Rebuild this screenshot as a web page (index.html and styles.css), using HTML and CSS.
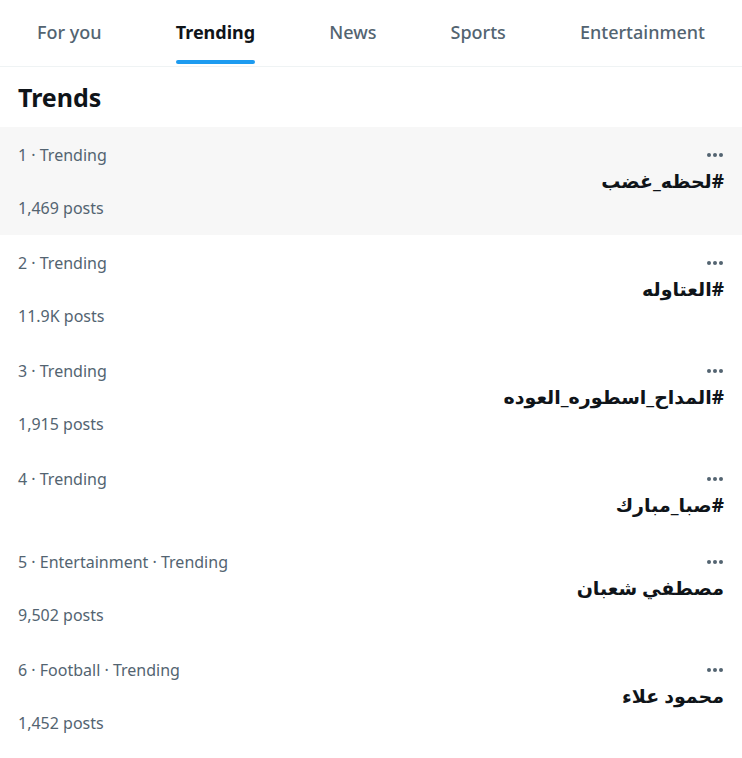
FILE: index.html
```html
<!DOCTYPE html>
<html lang="en">
<head>
  <meta charset="UTF-8" />
  <meta name="viewport" content="width=device-width, initial-scale=1.0" />
  <title>Explore - Trending</title>
  <link rel="stylesheet" href="styles.css">
</head>
<body>
  <div class="page">
    <nav class="tabs">
      <a class="tab">For you</a>
      <a class="tab active"><span>Trending</span></a>
      <a class="tab">News</a>
      <a class="tab">Sports</a>
      <a class="tab">Entertainment</a>
    </nav>

    <h2 class="section-title">Trends</h2>

    <div class="trend hover">
      <div class="meta"><span>1 · Trending</span><span class="more"><svg viewBox="0 0 18 6"><circle cx="3" cy="3" r="2"/><circle cx="9" cy="3" r="2"/><circle cx="15" cy="3" r="2"/></svg></span></div>
      <div class="name" dir="rtl">#لحظه_غضب</div>
      <div class="posts">1,469 posts</div>
    </div>

    <div class="trend">
      <div class="meta"><span>2 · Trending</span><span class="more"><svg viewBox="0 0 18 6"><circle cx="3" cy="3" r="2"/><circle cx="9" cy="3" r="2"/><circle cx="15" cy="3" r="2"/></svg></span></div>
      <div class="name" dir="rtl">#العتاوله</div>
      <div class="posts">11.9K posts</div>
    </div>

    <div class="trend">
      <div class="meta"><span>3 · Trending</span><span class="more"><svg viewBox="0 0 18 6"><circle cx="3" cy="3" r="2"/><circle cx="9" cy="3" r="2"/><circle cx="15" cy="3" r="2"/></svg></span></div>
      <div class="name" dir="rtl">#المداح_اسطوره_العوده</div>
      <div class="posts">1,915 posts</div>
    </div>

    <div class="trend">
      <div class="meta"><span>4 · Trending</span><span class="more"><svg viewBox="0 0 18 6"><circle cx="3" cy="3" r="2"/><circle cx="9" cy="3" r="2"/><circle cx="15" cy="3" r="2"/></svg></span></div>
      <div class="name" dir="rtl">#صبا_مبارك</div>
    </div>

    <div class="trend">
      <div class="meta"><span>5 · Entertainment · Trending</span><span class="more"><svg viewBox="0 0 18 6"><circle cx="3" cy="3" r="2"/><circle cx="9" cy="3" r="2"/><circle cx="15" cy="3" r="2"/></svg></span></div>
      <div class="name" dir="rtl">مصطفي شعبان</div>
      <div class="posts">9,502 posts</div>
    </div>

    <div class="trend">
      <div class="meta"><span>6 · Football · Trending</span><span class="more"><svg viewBox="0 0 18 6"><circle cx="3" cy="3" r="2"/><circle cx="9" cy="3" r="2"/><circle cx="15" cy="3" r="2"/></svg></span></div>
      <div class="name" dir="rtl">محمود علاء</div>
      <div class="posts">1,452 posts</div>
    </div>
  </div>
</body>
</html>
```

FILE: styles.css
```css
body {
  margin: 0;
  background: #fff;
  color: #0f1419;
  font-family: 'Noto Sans', 'DejaVu Sans', sans-serif;
}
.page {
  width: 742px;
}
.tabs {
  display: flex;
  height: 66px;
  border-bottom: 1px solid #eff3f4;
}
.tab {
  flex: 1 1 auto;
  display: flex;
  align-items: center;
  justify-content: center;
  font-size: 18px;
  font-weight: 500;
  color: #536471;
  padding-bottom: 2px;
}
.tab.active {
  color: #0f1419;
  font-weight: 700;
}
.tab.active span {
  position: relative;
  height: 100%;
  display: flex;
  align-items: center;
}
.tab.active span::after {
  content: '';
  position: absolute;
  left: 0;
  right: 0;
  bottom: 0;
  height: 4px;
  border-radius: 4px;
  background: #1d9bf0;
}
.section-title {
  margin: 0;
  padding: 0 18px;
  height: 60px;
  line-height: 60px;
  font-size: 25px;
  font-weight: 700;
}
.trend {
  padding: 16px 18px 14px;
}
.trend.hover {
  background: #f7f7f7;
}
.meta {
  display: flex;
  justify-content: space-between;
  align-items: center;
  height: 24px;
  font-size: 16px;
  color: #536471;
}
.more svg {
  display: block;
  width: 18px;
  height: 6px;
  fill: #536471;
}
.name {
  height: 29px;
  line-height: 29px;
  font-size: 19px;
  font-weight: 700;
  text-align: right;
}
.posts {
  height: 25px;
  line-height: 25px;
  font-size: 16px;
  color: #536471;
}
```
